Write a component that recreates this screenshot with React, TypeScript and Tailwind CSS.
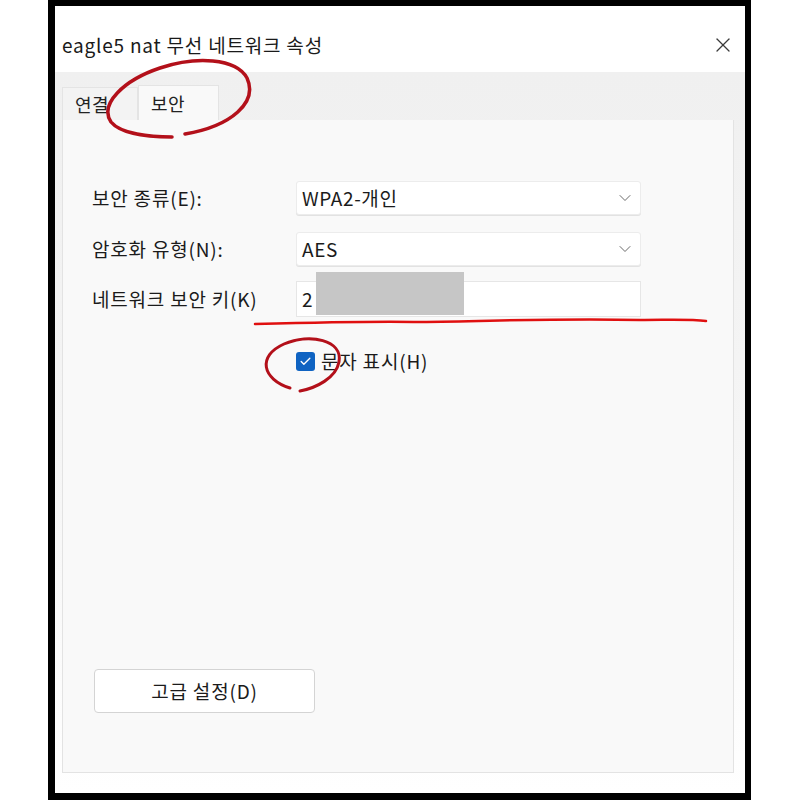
import { Check, ChevronDown, X } from "lucide-react"

const font = { fontFamily: "'Noto Sans CJK KR', 'Noto Sans', sans-serif" }

const Select = ({ value }: { value: string }) => (
    <div className="w-[345px] h-[34px] bg-white border border-[#ececec] rounded-[3px] shadow-[0_1px_0_#e2e2e2] flex items-center justify-between pl-[5px] pr-[5px]">
        <span className="text-[19px] tracking-[0.6px] text-[#1b1b1b]">{value}</span>
        <ChevronDown className="w-[20px] h-[20px] text-[#6a6a6a]" strokeWidth={1.2} />
    </div>
)

export default function App() {
    return (
        <div className="relative w-[800px] h-[800px] bg-white" style={font}>
            <div className="ml-[48px] w-[703px] h-[800px] border-l-[7px] border-r-[6px] border-t-[6px] border-b-[7px] border-black flex flex-col bg-white">
                {/* Title bar */}
                <div className="h-[66px] flex items-center justify-between pl-[7px] pr-[10px] pt-[12px]">
                    <span className="text-[19px] text-[#1a1a1a] tracking-[0.8px]">eagle5 nat 무선 네트워크 속성</span>
                    <X className="w-[24px] h-[24px] text-[#3a3a3a]" strokeWidth={1.3} />
                </div>

                {/* Body */}
                <div className="flex-1 flex flex-col bg-gradient-to-b from-[#f0f0f0] via-[#f5f5f5] to-white pl-[7px] pr-[11px] pb-[20px]">
                    {/* Tabs */}
                    <div className="h-[48px] flex items-end">
                        <div className="w-[76px] h-[33px] bg-[#f3f3f3] border border-b-0 border-[#e4e4e4] flex items-center pl-[12px] text-[18px] tracking-[0.5px] text-[#222]">
                            연결
                        </div>
                        <div className="w-[81px] h-[35px] bg-[#f9f9f9] border border-b-0 border-[#e4e4e4] flex items-center pl-[12px] text-[18px] tracking-[0.5px] text-[#222]">
                            보안
                        </div>
                    </div>

                    {/* Panel */}
                    <div className="flex-1 bg-[#f9f9f9] border border-t-0 border-[#e3e3e3] pl-[29px] pt-[61px] flex flex-col text-[#1b1b1b] text-[19px] tracking-[0.8px]">
                        <div className="flex flex-col gap-[17px]">
                            <div className="flex items-center">
                                <span className="w-[204px]">보안 종류(E):</span>
                                <Select value="WPA2-개인" />
                            </div>
                            <div className="flex items-center">
                                <span className="w-[204px]">암호화 유형(N):</span>
                                <Select value="AES" />
                            </div>
                            <div className="flex items-center -mt-[2px]">
                                <span className="w-[204px]">네트워크 보안 키(K)</span>
                                <div className="relative w-[345px] h-[36px] bg-white border border-[#e6e6e6] flex items-center pl-[5px]">
                                    <span>2</span>
                                    <div className="absolute left-[19px] top-[-10px] w-[148px] h-[43px] bg-[#c6c6c6]" />
                                </div>
                            </div>
                        </div>

                        <div className="flex items-center gap-[6px] ml-[204px] mt-[30px]">
                            <div className="w-[19px] h-[19px] rounded-[3px] bg-[#0f63c2] flex items-center justify-center">
                                <Check className="w-[13px] h-[13px] text-white" strokeWidth={2.5} />
                            </div>
                            <span>문자 표시(H)</span>
                        </div>

                        <div className="flex-1" />

                        <div className="mb-[59px] ml-[2px] w-[221px] h-[44px] bg-white border border-[#d4d4d4] rounded-[4px] flex items-center justify-center">
                            고급 설정(D)
                        </div>
                    </div>
                </div>
            </div>

            {/* Red hand-drawn annotations */}
            <svg className="absolute inset-0 pointer-events-none" width="800" height="800" viewBox="0 0 800 800" fill="none">
                <path
                    d="M185 134 C232 126 258 102 247 78 C236 58 196 56 160 68 C124 80 99 104 111 122 C121 134 150 137 172 137"
                    stroke="#b3101a"
                    strokeWidth="3.5"
                    strokeLinecap="round"
                />
                <path
                    d="M290 388 C262 379 257 356 284 344 C310 333 343 340 339 362 C336 378 316 388 300 391"
                    stroke="#b3101a"
                    strokeWidth="3"
                    strokeLinecap="round"
                />
                <path
                    d="M255 324 C330 322 380 321 420 322 C500 321 560 318 640 320 C670 320 690 319 706 321"
                    stroke="#e01010"
                    strokeWidth="2.5"
                    strokeLinecap="round"
                />
            </svg>
        </div>
    )
}
